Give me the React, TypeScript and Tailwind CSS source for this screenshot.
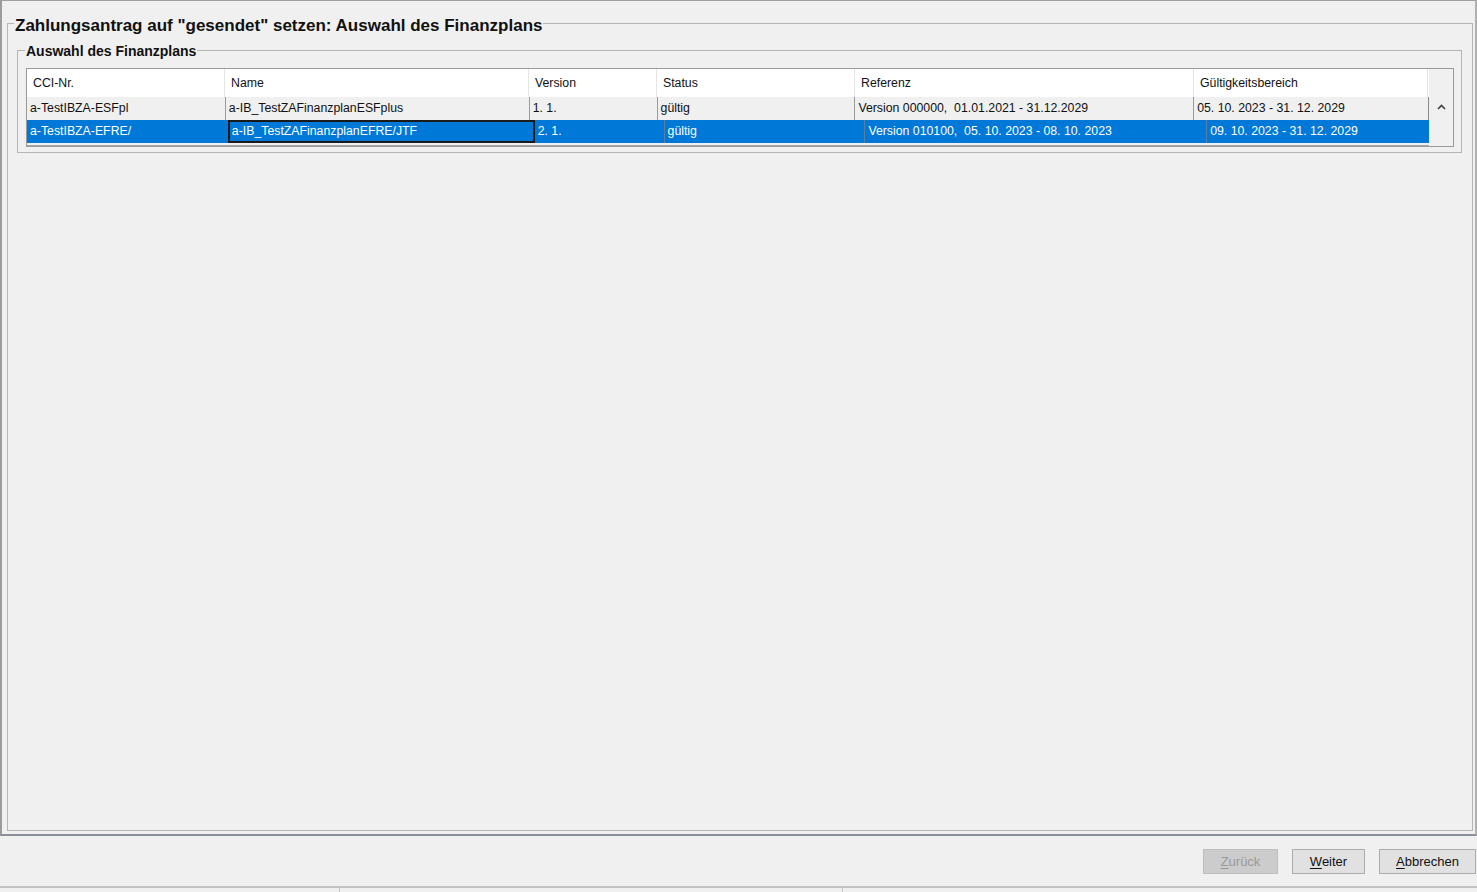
import React from "react";

const headCols = [
  { label: "CCI-Nr.", w: "w-[198px]" },
  { label: "Name", w: "w-[304px]" },
  { label: "Version", w: "w-[128px]" },
  { label: "Status", w: "w-[198px]" },
  { label: "Referenz", w: "w-[339px]" },
  { label: "Gültigkeitsbereich", w: "w-[234px]" },
];

const row1 = [
  { text: "a-TestIBZA-ESFpl", w: "w-[199px]" },
  { text: "a-IB_TestZAFinanzplanESFplus", w: "w-[304px]" },
  { text: "1. 1.", w: "w-[128px]" },
  { text: "gültig", w: "w-[198px]" },
  { text: "Version 000000,  01.01.2021 - 31.12.2029", w: "w-[339px]" },
  { text: "05. 10. 2023 - 31. 12. 2029", w: "w-[234px]" },
];

const row2 = [
  { text: "2. 1.", w: "w-[130px]" },
  { text: "gültig", w: "w-[201px]" },
  { text: "Version 010100,  05. 10. 2023 - 08. 10. 2023", w: "w-[342px]" },
  { text: "09. 10. 2023 - 31. 12. 2029", w: "w-[222px]" },
];

function Button({ label, disabled }: { label: string; disabled?: boolean }) {
  const first = label[0];
  const rest = label.slice(1);
  return (
    <button
      className={
        "h-[25px] border text-[13px] " +
        (disabled
          ? "bg-[#cccccc] border-[#bfbfbf] text-[#9a9a9a]"
          : "bg-[#e1e1e1] border-[#adadad] text-[#111]")
      }
      style={{ width: label === "Abbrechen" ? 97 : label === "Zurück" ? 75 : 73 }}
    >
      <span className="underline underline-offset-2">{first}</span>
      {rest}
    </button>
  );
}

export default function App() {
  return (
    <div
      className="w-[1477px] h-[892px] bg-[#f0f0f0] flex flex-col text-[#111] overflow-hidden"
      style={{ fontFamily: '"Liberation Sans", Arial, sans-serif' }}
    >
      <div className="h-[836px] flex border-t border-t-[#a0a0a0] border-l-2 border-l-[#9c9c9c] border-r-2 border-r-[#b0b0b0] border-b-2 border-b-[#8a8f99] pt-[11px] pl-[5px] pr-[2px] pb-[3px]">
        <fieldset className="flex-1 border border-[#b5b5b5] pl-[9px] pr-[10px] pt-[5px] min-w-0">
          <legend className="ml-[-3px] px-[1px] pt-[4px] text-[17px] leading-[19px] font-bold text-[#111]">
            Zahlungsantrag auf "gesendet" setzen: Auswahl des Finanzplans
          </legend>
          <fieldset className="border border-[#b5b5b5] pl-[8px] pr-[7px] pt-[8px] pb-[5px] min-w-0">
            <legend className="ml-[-1px] px-[1px] pt-[3px] text-[14px] leading-[17px] font-bold text-[#111]">
              Auswahl des Finanzplans
            </legend>
            <div className="flex border border-[#9a9a9a] bg-[#f0f0f0]">
              <div className="w-[1402px] flex flex-col text-[12.3px]">
                <div className="flex h-[28px] bg-white">
                  {headCols.map((c) => (
                    <div
                      key={c.label}
                      className={c.w + " border-r border-[#e5e5e5] pl-[6px] flex items-center"}
                    >
                      {c.label}
                    </div>
                  ))}
                </div>
                <div className="flex h-[23px] bg-[#f0f0f0] border-r border-[#8a8a8a]">
                  {row1.map((c, i) => (
                    <div
                      key={i}
                      className={
                        c.w +
                        " pl-[3px] flex items-center whitespace-pre " +
                        (i < 5 ? "border-r border-[#9a9a9a]" : "")
                      }
                    >
                      {c.text}
                    </div>
                  ))}
                </div>
                <div className="flex h-[23px] bg-[#0078d7] text-white">
                  <div className="w-[201px] pl-[3px] flex items-center">a-TestIBZA-EFRE/</div>
                  <div className="w-[307px] border-2 border-[#1a1a1a] pl-[2px] flex items-center">
                    a-IB_TestZAFinanzplanEFRE/JTF
                  </div>
                  {row2.map((c, i) => (
                    <div
                      key={i}
                      className={
                        c.w +
                        " pl-[3px] flex items-center whitespace-pre " +
                        (i < 3 ? "border-r border-[#5b7da0]" : "")
                      }
                    >
                      {c.text}
                    </div>
                  ))}
                </div>
                <div className="h-[3px] border-b border-[#a8a8a8]" />
              </div>
              <div className="flex-1 flex flex-col items-center pt-[35px]">
                <svg width="9" height="6" viewBox="0 0 9 6">
                  <polyline points="1,5 4.5,1.5 8,5" fill="none" stroke="#404040" strokeWidth="1.6" />
                </svg>
              </div>
            </div>
          </fieldset>
        </fieldset>
      </div>
      <div className="flex-1 flex items-start justify-end gap-[14px] pt-[13px] pr-[1px]">
        <Button label="Zurück" disabled />
        <Button label="Weiter" />
        <Button label="Abbrechen" />
      </div>
      <div className="h-[6px] border-t-2 border-[#c4c4c4] flex">
        <div className="w-[340px] border-r border-[#c8c8c8]" />
        <div className="w-[503px] border-r border-[#c8c8c8]" />
        <div className="flex-1" />
      </div>
    </div>
  );
}
